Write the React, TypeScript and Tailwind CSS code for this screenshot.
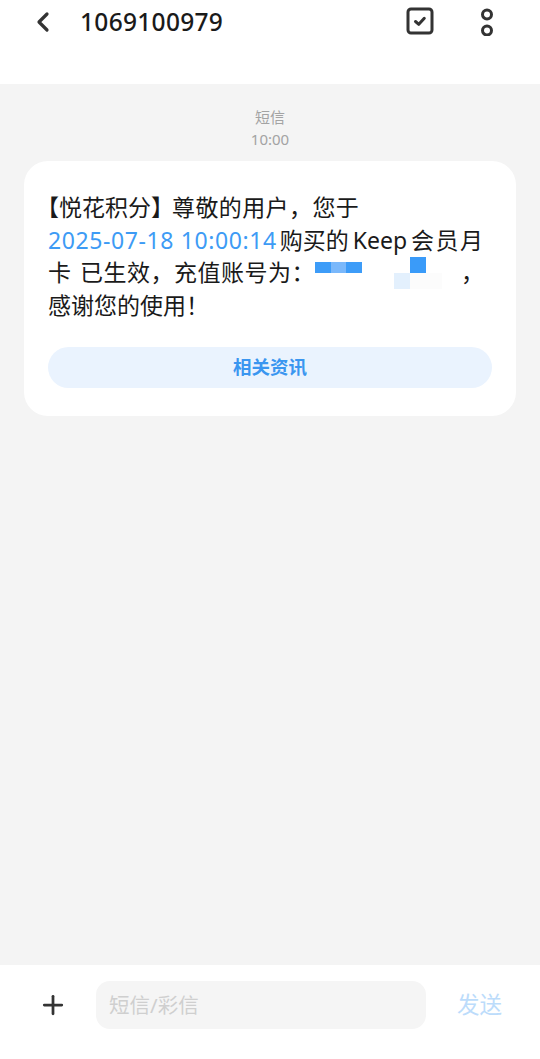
import { ChevronLeft, Plus } from 'lucide-react';

const FONT = { fontFamily: '"Noto Sans", "Noto Sans CJK SC", sans-serif' };

const Mosaic = () => (
  <svg width="146" height="33" viewBox="0 0 146 33" className="inline-block align-top">
    <rect x="0" y="6" width="16" height="11" fill="#3d9cf8" />
    <rect x="16" y="6" width="15" height="11" fill="#7ab8fb" />
    <rect x="31" y="6" width="16" height="11" fill="#3d9cf8" />
    <rect x="95" y="1" width="16" height="16" fill="#3a9bf9" />
    <rect x="79" y="17" width="16" height="16" fill="#e3f0fd" />
    <rect x="95" y="17" width="32" height="16" fill="#fcfcfc" />
  </svg>
);

export default function App() {
  return (
    <div className="w-[540px] h-[1059px] flex flex-col bg-[#f4f4f4] text-[#1a1a1a]" style={FONT}>
      {/* header */}
      <div className="h-[84px] bg-white flex items-start pt-[4px] shrink-0">
        <div className="h-[36px] flex items-center w-full">
          <ChevronLeft className="ml-[27px] text-[#333]" size={32} strokeWidth={2.4} />
          <div className="ml-[21px] text-[24.5px] font-medium tracking-[0.3px]">1069100979</div>
          <div className="flex-1" />
          <svg width="30" height="30" viewBox="0 0 30 30" className="mr-[44px] mt-[-3px]">
            <rect x="3" y="3" width="24" height="24" rx="3" fill="none" stroke="#333" strokeWidth="3" />
            <path d="M10.5 15.5 L13.8 18.3 L19.3 12.3" fill="none" stroke="#333" strokeWidth="3" strokeLinecap="round" strokeLinejoin="round" />
          </svg>
          <svg width="16" height="30" viewBox="0 0 16 30" className="mr-[45px] mt-[-3px]">
            <circle cx="8" cy="8.5" r="4.5" fill="none" stroke="#333" strokeWidth="3" />
            <circle cx="8" cy="24.5" r="4.5" fill="none" stroke="#333" strokeWidth="3" />
          </svg>
        </div>
      </div>

      {/* messages */}
      <div className="flex-1 flex flex-col items-center pt-[22px]">
        <div className="text-[15px] leading-[22px] text-[#a3a3a3] text-center">短信</div>
        <div className="text-[15px] leading-[22px] text-[#a3a3a3] text-center">10:00</div>

        <div className="mt-[11px] w-[492px] bg-white rounded-[24px] pt-[30px] pb-[28px] pl-[24px] pr-[20px]">
          <div className="text-[23px] leading-[32.5px] whitespace-nowrap">
            <div>
              <span className="ml-[-12px]">【</span>
              <span>悦花积分</span>
              <span className="mr-[-2px]">】</span>
              <span className="tracking-[0.4px]">尊敬的用户，您于</span>
            </div>
            <div>
              <span className="text-[#3d9bf5] tracking-[0.6px]">2025-07-18 10:00:14</span>
              <span className="ml-[3px]">购买的</span>
              <span className="mx-[4px]">Keep</span>
              <span className="tracking-[1.5px]">会员月</span>
            </div>
            <div>
              <span>卡</span>
              <span className="inline-block w-[9px]" />
              <span className="tracking-[0.5px]">已生效，充值账号为：</span>
              <Mosaic />，
            </div>
            <div>感谢您的使用！</div>
          </div>
          <div className="mt-[25px] h-[41px] rounded-full bg-[#eaf3fe] flex items-center justify-center text-[18.5px] font-bold text-[#3a96f0] mr-[4px]">
            相关资讯
          </div>
        </div>
      </div>

      {/* input bar */}
      <div className="h-[94px] bg-white flex items-start pt-[16px] shrink-0">
        <Plus className="ml-[38px] mt-[9px] text-[#333]" size={30} strokeWidth={2.2} />
        <div className="ml-[28px] w-[330px] h-[48px] rounded-[14px] bg-[#f5f5f5] flex items-center pl-[13px] text-[20.5px] text-[#cfcfcf]">
          短信/彩信
        </div>
        <div className="ml-[31px] h-[48px] flex items-center text-[22.5px] text-[#bcdcfb]">发送</div>
      </div>
    </div>
  );
}
